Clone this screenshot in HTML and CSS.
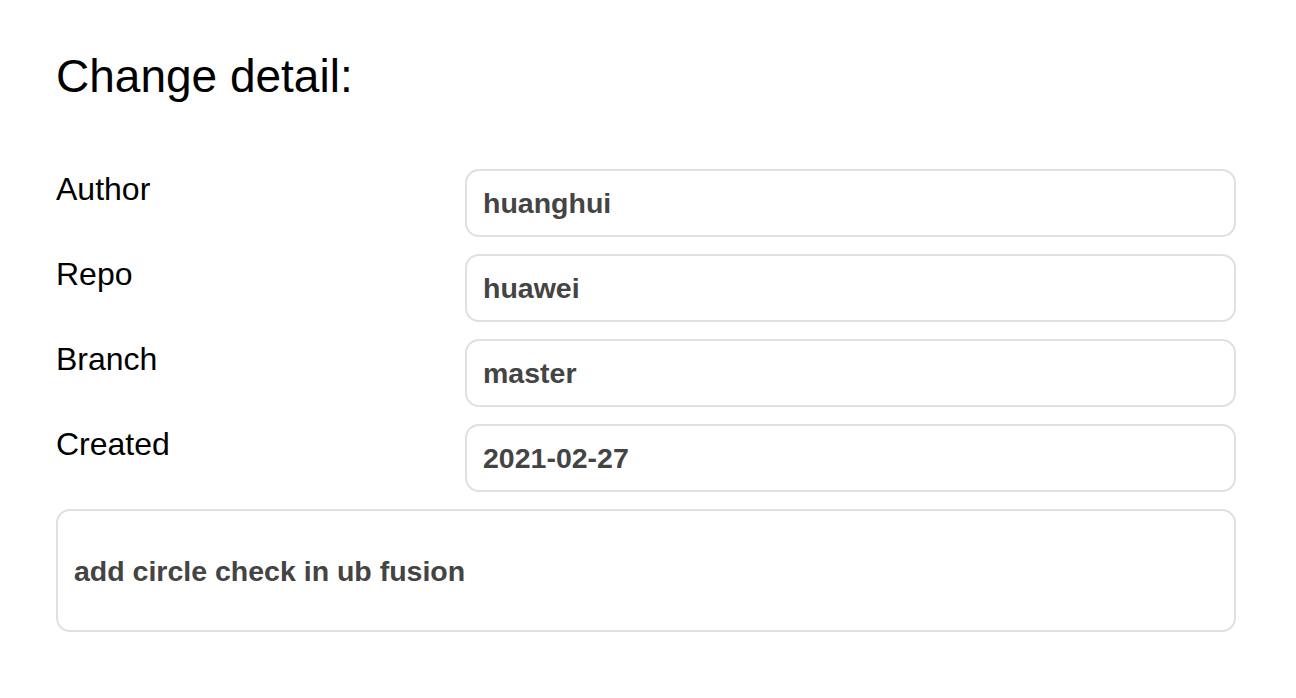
FILE: index.html
```html
<!DOCTYPE html>
<html>
<head>
<meta charset="utf-8">
<link rel="stylesheet" href="styles.css">
</head>
<body>
<main class="page">
  <h1 class="title">Change detail:</h1>
  <div class="details">
    <div class="label">Author</div>
    <div class="field">huanghui</div>
    <div class="label">Repo</div>
    <div class="field">huawei</div>
    <div class="label">Branch</div>
    <div class="field">master</div>
    <div class="label">Created</div>
    <div class="field">2021-02-27</div>
    <div class="field message">add circle check in ub fusion</div>
  </div>
</main>
</body>
</html>
```
FILE: styles.css
```css
html, body {
  margin: 0;
  padding: 0;
  background: #ffffff;
}
.page {
  padding: 50px 60px 0 56px;
  font-family: "Liberation Sans", Arial, sans-serif;
  color: #000;
}
.title {
  margin: 0;
  font-size: 46px;
  font-weight: 400;
  line-height: 53px;
}
.details {
  margin-top: 66px;
  display: grid;
  grid-template-columns: 409px 1fr;
  row-gap: 17px;
}
.label {
  font-size: 32px;
  line-height: 37px;
  padding-top: 2px;
}
.field {
  box-sizing: border-box;
  height: 68px;
  border: 2px solid #e0e0e0;
  border-radius: 14px;
  padding: 0 16px;
  display: flex;
  align-items: center;
  font-size: 28.5px;
  font-weight: 700;
  color: #444444;
}
.message {
  grid-column: 1 / -1;
  height: 123px;
  padding-top: 2px;
}
```
